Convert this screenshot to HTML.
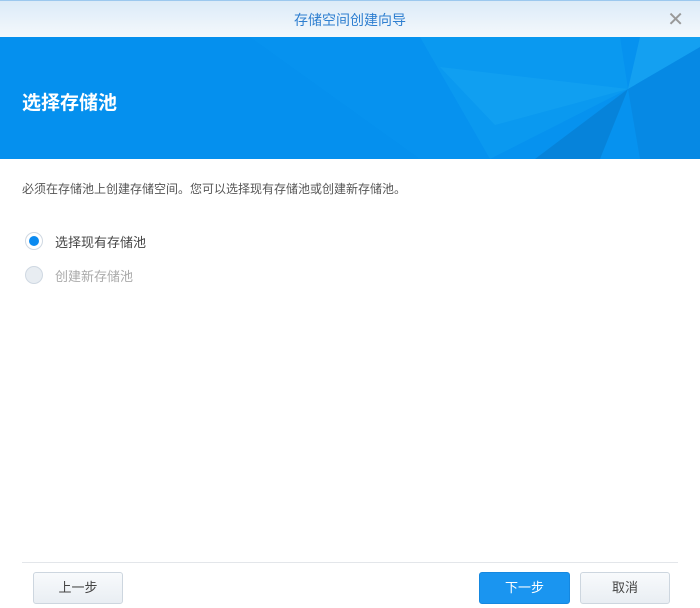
<!DOCTYPE html>
<html><head><meta charset="utf-8"><style>
*{margin:0;padding:0;box-sizing:border-box}
body{width:700px;height:608px;background:#fff;font-family:"Liberation Sans","Noto Sans CJK SC",sans-serif;position:relative;overflow:hidden}
.tb{position:absolute;left:0;top:0;width:700px;height:37px;background:linear-gradient(#dcebf8,#f4f8fc);border-top:1px solid #9cc8ee}
.tb .t{position:absolute;left:0;right:0;top:9px;text-align:center;font-size:14px;color:#2f7fd0}
.tb .x{position:absolute;right:16px;top:6px;font-size:20px;color:#999}
.bn{position:absolute;left:0;top:37px;width:700px;height:122px;background:#0590ee;overflow:hidden}
.bn h1{position:absolute;left:22px;top:51px;font-size:19px;color:#fff;font-weight:bold}
.d{position:absolute;left:22px;top:180px;font-size:12px;color:#555}
.r{position:absolute;left:25px;width:18px;height:18px;border-radius:50%;border:1px solid #cfd8e2;background:#fff}
.r.on::after{content:"";position:absolute;left:3px;top:3px;width:10px;height:10px;border-radius:50%;background:#0a8af0}
.r.off{background:#e8edf2}
.l{position:absolute;left:55px;font-size:13px}
.sep{position:absolute;left:22px;top:562px;width:656px;height:1px;background:#e3e6ea}
.b{position:absolute;top:572px;height:32px;border:1px solid #cdd6df;border-radius:3px;background:linear-gradient(#f8fafc,#e9eef3);font-size:13px;color:#444;text-align:center;line-height:30px}
.b.p{background:#1a95f0;border-color:#1588e0;color:#fff}
</style></head><body>
<div class="tb"><div class="t">存储空间创建向导</div><div class="x">✕</div></div>
<div class="bn">
<svg width="700" height="122" style="position:absolute;left:0;top:0">
<polygon points="250,0 700,0 700,122 420,122" fill="#0a98f0" opacity=".35"/>
<polygon points="420,0 620,0 628,52 490,122" fill="#13a6f4" opacity=".35"/>
<polygon points="628,52 700,10 700,122 640,122" fill="#0784dc" opacity=".6"/>
<polygon points="628,52 535,122 600,122" fill="#0679cc" opacity=".6"/>
<polygon points="440,30 628,52 495,88" fill="#22b0f4" opacity=".3"/>
<polygon points="640,0 700,0 700,10 628,52" fill="#2bb6f6" opacity=".4"/>
</svg>
<h1>选择存储池</h1></div>
<div class="d">必须在存储池上创建存储空间。您可以选择现有存储池或创建新存储池。</div>
<div class="r on" style="top:232px"></div><div class="l" style="top:232px;color:#444">选择现有存储池</div>
<div class="r off" style="top:266px"></div><div class="l" style="top:266px;color:#aaa">创建新存储池</div>
<div class="sep"></div>
<div class="b" style="left:33px;width:90px">上一步</div>
<div class="b p" style="left:479px;width:91px">下一步</div>
<div class="b" style="left:580px;width:90px">取消</div>
</body></html>
